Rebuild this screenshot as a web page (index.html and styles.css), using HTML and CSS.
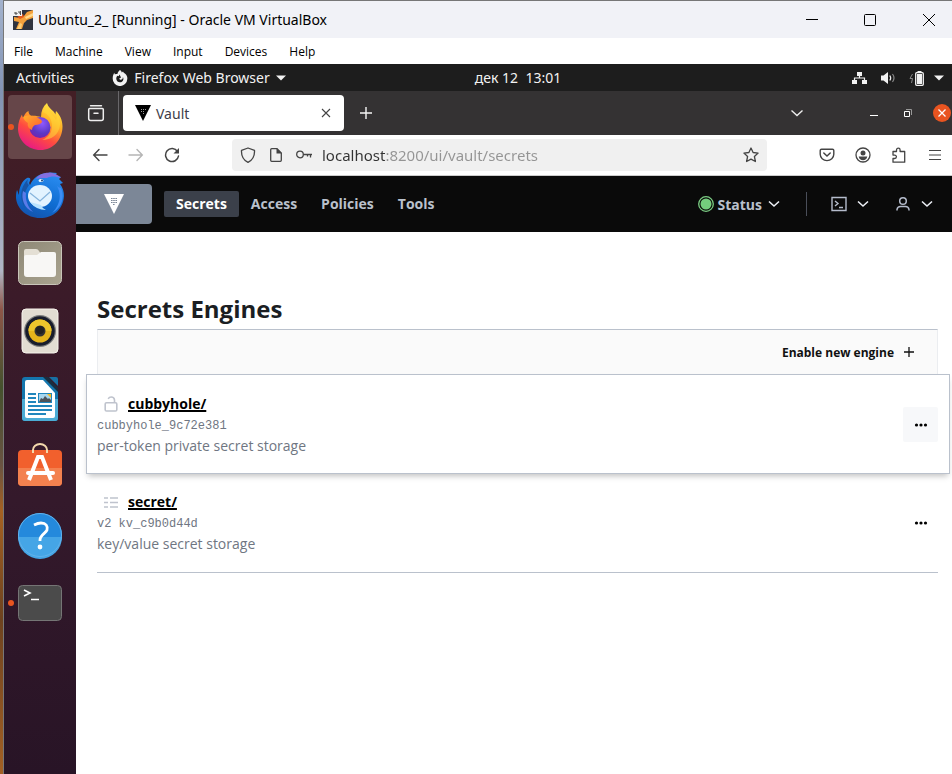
FILE: index.html
```html
<!DOCTYPE html>
<html lang="en">
<head>
<meta charset="utf-8">
<title>Ubuntu_2_ [Running] - Oracle VM VirtualBox</title>
<link rel="stylesheet" href="styles.css">
</head>
<body>
<div class="window">
  <header class="titlebar">
    <svg class="app-icon" width="20" height="20" viewBox="0 0 20 20" aria-hidden="true">
      <rect width="20" height="20" fill="#30343f"/>
      <path d="M1 7 7 8 11 6 14 2 20 0V8L14 10 11 13 9 19H3L6 12 1 11Z" fill="#f4a13c"/>
      <path d="M4 7 10 4 11 7 7 9Z" fill="#e2591d"/>
      <path d="M12 7 20 3V6L13 9Z" fill="#ffd98b"/>
      <path d="M4 19 7 13 9 14 8 19Z" fill="#ffcf77"/>
      <rect x="0" y="0" width="9" height="6" fill="#f2f2f2"/>
      <path d="M2 2v2h2V3H2M6 1v2h2M7.500 1v4" stroke="#555" fill="none"/>
    </svg>
    <h1 class="window-title">Ubuntu_2_ [Running] - Oracle VM VirtualBox</h1>
    <div class="window-buttons">
      <button type="button" aria-label="Minimize"><svg width="14" height="14" viewBox="0 0 14 14"><path d="M1 6.500h12" stroke="#000"/></svg></button>
      <button type="button" aria-label="Maximize"><svg width="14" height="14" viewBox="0 0 14 14"><rect x="1.500" y="1.500" width="11" height="11" rx="1" fill="none" stroke="#000"/></svg></button>
      <button type="button" aria-label="Close"><svg width="14" height="14" viewBox="0 0 14 14"><path d="M1 1 13 13M13 1 1 13" stroke="#000"/></svg></button>
    </div>
  </header>
  <nav class="menubar" aria-label="Machine window">
    <button type="button">File</button>
    <button type="button">Machine</button>
    <button type="button">View</button>
    <button type="button">Input</button>
    <button type="button">Devices</button>
    <button type="button">Help</button>
  </nav>

  <div class="topbar">
    <div class="topbar-left">
      <button type="button">Activities</button>
      <button type="button" class="app-menu">
        <svg width="16" height="16" viewBox="0 0 16 16" aria-hidden="true"><path fill="#f2f2f2" d="M8 0c1 .6 1.600 1.400 1.800 2.400L11 1.400c.4 1 1.300 1.500 2.200 2.300C15 5.400 15.500 7 15.300 9A7.300 7.300 0 0 1 .7 8.500C.7 6 1.400 4.100 2.500 2.800c0 .7.100 1.200.4 1.600.800-.5 1.600-.600 2.500-.4C5.800 2.300 6.700.9 8 0Z"/><path fill="#1d1d1d" d="M7.600 4.600 9 7.500l-2 1.300 1.300.9c1.700.2 2.700-.9 2.600-2.600 1 1.500.6 3.600-.9 4.600-2.400 1.500-5.500 0-5.700-2.700-.100-1.400.4-2.500 1.300-3.200.3.300.6.500 1 .5Z"/></svg>
        <span>Firefox Web Browser</span>
        <svg width="10" height="6" viewBox="0 0 10 6" aria-hidden="true"><path d="M0 .5h10L5 5.500Z" fill="#f2f2f2"/></svg>
      </button>
    </div>
    <time class="clock">дек 12&nbsp; 13:01</time>
    <button type="button" class="tray" aria-label="System menu">
      <svg width="16" height="16" viewBox="0 0 16 16"><path d="M6 2h5v4H6ZM1 10h5v4H1ZM11 10h5v4h-5Z" fill="#f2f2f2"/><path d="M8.500 6v2M3.500 10V8h10v2" fill="none" stroke="#f2f2f2" stroke-width="1.200"/></svg>
      <svg width="16" height="16" viewBox="0 0 16 16"><path d="M1 5.500h2.500L8 2v12l-4.500-3.500H1Z" fill="#f2f2f2"/><path d="M9.800 5.500q1.800 2.500 0 5" fill="none" stroke="#f2f2f2" stroke-width="1.200"/><path d="M12.500 4q3 4 0 8" fill="none" stroke="#888" stroke-width="1.200"/></svg>
      <svg width="16" height="16" viewBox="0 0 16 16"><path d="M3.500 4 1 8.500h2.500L2.500 13" fill="none" stroke="#888"/><rect x="6.700" y="2.700" width="7.600" height="12.600" rx="1" fill="none" stroke="#f2f2f2" stroke-width="1.300"/><path d="M8 4h5v10H8ZM8.500 1h4v2h-4Z" fill="#f2f2f2"/></svg>
      <svg class="tray-arrow" width="10" height="6" viewBox="0 0 10 6"><path d="M0 .5h10L5 5.500Z" fill="#f2f2f2"/></svg>
    </button>
  </div>

  <div class="desktop">
    <nav class="dock" aria-label="Dock">
      <button type="button" class="active running" aria-label="Firefox">
        <svg width="48" height="48" viewBox="0 0 48 48">
          <defs>
            <linearGradient id="ffa" x1=".8" y1="0" x2=".25" y2="1"><stop offset="0" stop-color="#fff14a"/><stop offset=".35" stop-color="#ffae25"/><stop offset=".65" stop-color="#ff4b40"/><stop offset="1" stop-color="#e5158c"/></linearGradient>
            <radialGradient id="ffb" cx=".6" cy=".3" r=".8"><stop offset="0" stop-color="#9059ff"/><stop offset=".6" stop-color="#5b38c4"/><stop offset="1" stop-color="#7a1fa8"/></radialGradient>
            <linearGradient id="ffc" x1="0" y1="0" x2="1" y2="1"><stop offset="0" stop-color="#ffb12b"/><stop offset="1" stop-color="#ff5a32"/></linearGradient>
          </defs>
          <path fill="url(#ffa)" d="M31 0c1 4 4 6 6.500 8.500 1 1 1.500 2 1.800 3L40 8c4 4 6.500 9 6.500 15.500C46.500 36.500 37 47 24.500 47S2 37.500 2 25.500c0-6 2-10.500 4-14 .2 2 .8 3 1.500 3.500C8 12 9.500 9.500 12.500 8c0 2.500 1 4 3 5 3-.5 6.500.5 9.500 1 0-6 2-10.500 6-14Z"/>
          <circle cx="24" cy="24.500" r="10.500" fill="url(#ffb)"/>
          <path d="M7 14c4-2 10-2 15 1 3 1 4 3 4 4-1 2-4 3-7 3-2 1-3 3-3 5-3-1-5-4-4-7-2-1-4-3-5-6Z" fill="url(#ffc)"/>
          <path d="M27 9c5 2 9 7 9 14 0 8-5 12-10 14 9 0 17-5 18-15 .4-4-1-8-3-10 0 3-.5 4-1 5-2-5-8-7-9-15-3 3-4 5-4 7Z" fill="#ffd93a" opacity=".55"/>
        </svg>
      </button>
      <button type="button" aria-label="Thunderbird">
        <svg width="48" height="48" viewBox="0 0 48 48">
          <defs><linearGradient id="tba" x1=".7" y1="0" x2=".3" y2="1"><stop offset="0" stop-color="#2a8cf0"/><stop offset=".6" stop-color="#0e6bd0"/><stop offset="1" stop-color="#1453ad"/></linearGradient></defs>
          <path fill="url(#tba)" d="M14 14c3-7 9-12 18-12 3-1 6 0 9 0l-2 2 6 2-2 2 4 4-3 1c3 4 4 8 4 12-1 14-11 22-24 22C11 47 1 38 0 27c0-3 0-5 1-8 1 2 1 3 2 5 0-8 3-14 8-17 3-1 4 1 3 3-1 1-1 3 0 4Z"/>
          <path d="M20 8c3-5 9-7 16-6 5 1 7 3 9 5-6-2-10-2-14 0-5 0-8 0-11 1Z" fill="#846fe0"/>
          <path d="M12 8C4 16 3 28 9 37c-3-8-1-16 4-23-2-1-2-3-1-6Z" fill="#1855a6"/>
          <path d="M7 20c-2 8 1 17 10 21-5-5-8-12-7-19Z" fill="#5b7be8"/>
          <path d="M41 15c5 9 3 19-5 27 10-5 13-16 9-25-1 0-3-1-4-2Z" fill="#3d8df5"/>
          <ellipse cx="24" cy="25" rx="12" ry="11" fill="#e3f3ff"/>
          <path d="M14 31q6 8 16 8-4-2-5-5Z" fill="#b8e3ff"/>
          <path d="m14 22 10 8 10-9" fill="none" stroke="#88b5dd" stroke-width="1.300"/>
          <ellipse cx="25" cy="9.500" rx="2.500" ry="1.500" fill="#e8f5ff"/><circle cx="26" cy="9.500" r="1" fill="#174176"/>
        </svg>
      </button>
      <button type="button" aria-label="Files">
        <svg width="48" height="48" viewBox="0 0 48 48">
          <defs><linearGradient id="fia" x1="0" y1="0" x2="1" y2="1"><stop offset="0" stop-color="#8e8876"/><stop offset="1" stop-color="#aaa490"/></linearGradient></defs>
          <rect x="2.500" y="2.500" width="43" height="43" rx="5" fill="url(#fia)" stroke="#c9c5b9"/>
          <path d="M8 16v-4q0-2 2-2h10q2 0 3 2l2 3v5H8Z" fill="#e4dfd4"/>
          <path d="M8 18q0-2 2-2h11l4-3h13q2 0 2 2v20q0 3-3 3H11q-3 0-3-3Z" fill="#f8f7f5"/>
        </svg>
      </button>
      <button type="button" aria-label="Rhythmbox">
        <svg width="48" height="48" viewBox="0 0 48 48">
          <rect x="6" y="2" width="36" height="44" rx="4" fill="#e2ddd2" stroke="#f7f4ed"/>
          <circle cx="24" cy="24" r="16" fill="#7c7d7c"/><circle cx="24" cy="24" r="14.800" fill="#181d2c"/><circle cx="24" cy="24" r="11.500" fill="#e5b51b"/><path d="M12.500 24a11.500 11.500 0 0 1 23 0Z" fill="#edc62c"/><circle cx="24" cy="24" r="5.500" fill="#333"/><circle cx="24" cy="23" r="4" fill="#222"/>
        </svg>
      </button>
      <button type="button" aria-label="LibreOffice Writer">
        <svg width="48" height="48" viewBox="0 0 48 48">
          <path d="M9 2h20l13 14v27q0 3-3 3H9q-3 0-3-3V5q0-3 3-3Z" fill="#1476ad"/>
          <path d="M6 24h36v19q0 3-3 3H9q-3 0-3-3Z" fill="#4bacd5"/>
          <path d="M11 5h16l12 13v23q0 2-2 2H11q-2 0-2-2V7q0-2 2-2Z" fill="#fff"/>
          <path d="M27 2 42 17V13L32 2Z" fill="#182e40"/><path d="M33 2h7q2 0 2 2v7Z" fill="#1770a4"/>
          <path d="M12 19h8M12 23h8M12 27h8M12 31h24M12 35h24M12 39h18" stroke="#2086bd" stroke-width="2"/>
          <rect x="22" y="18" width="14" height="10" fill="#2086bd"/><rect x="23" y="19" width="12" height="8" fill="#a8d6ee"/><path d="m23 27 2-4 2 1 2-3 3 3 1-1 2 2v2Z" fill="#4c5359"/><path d="M31 19h4v4Z" fill="#f5b921"/>
        </svg>
      </button>
      <button type="button" aria-label="Ubuntu Software">
        <svg width="48" height="48" viewBox="0 0 48 48">
          <rect x="2" y="7" width="44" height="36" rx="4" fill="#f1602d"/><path d="M2 25h44v14q0 4-4 4H6q-4 0-4-4Z" fill="#f3814f"/>
          <path d="M17 10V7a7 6 0 0 1 14 0v3" fill="none" stroke="#f4d8ac" stroke-width="2"/>
          <path d="m13 37 9-23h4l9 23" fill="none" stroke="#fff" stroke-width="4"/><path d="M12 30h25" stroke="#fff" stroke-width="4" stroke-linecap="round"/>
        </svg>
      </button>
      <button type="button" aria-label="Help">
        <svg width="48" height="48" viewBox="0 0 48 48">
          <circle cx="24" cy="24" r="22" fill="#2489dc"/><path d="M2 26h44a22 22 0 0 1-44 0Z" fill="#45a5e6"/><circle cx="24" cy="24" r="21.500" fill="none" stroke="#62b2ea"/>
          <path d="M18 14q4-2 7-2c5 0 7 3 6 7-1 3-7 5-7 10v1" fill="none" stroke="#fff" stroke-width="2.800"/><circle cx="24" cy="36" r="2.400" fill="#fff"/>
        </svg>
      </button>
      <button type="button" class="running" aria-label="Terminal">
        <svg width="48" height="48" viewBox="0 0 48 48">
          <rect x="2.500" y="6.500" width="43" height="35" rx="4" fill="#4b4b4b" stroke="#757575"/><path d="m8 11 6 3-6 3" fill="none" stroke="#fff" stroke-width="1.600"/><path d="M15 20.500h8" stroke="#fff" stroke-width="1.500"/>
        </svg>
      </button>
    </nav>

    <main class="browser">
      <div class="tabstrip">
        <button type="button" class="tab-list" aria-label="View recent browsing"><svg width="18" height="18" viewBox="0 0 18 18"><path d="M3.500 1.700h11" stroke="#eee" stroke-width="1.400" stroke-linecap="round"/><path d="M1.700 5.500q0-1 1-1h12.600q1 0 1 1v9q0 2-2 2H3.700q-2 0-2-2ZM7 9.300h4" fill="none" stroke="#eee" stroke-width="1.500" stroke-linecap="round"/></svg></button>
        <div class="tab">
          <svg width="16" height="16" viewBox="0 0 16 16" aria-hidden="true"><path d="M0 0h16L8 16Z" fill="#000"/><path d="M6 4h1v1H6ZM8 4h1v1H8ZM10 4h1v1h-1ZM6 6h1v1H6ZM8 6h1v1H8ZM8 8h1v1H8Z" fill="#999"/></svg>
          <span class="tab-title">Vault</span>
          <button type="button" aria-label="Close tab"><svg width="10" height="10" viewBox="0 0 10 10"><path d="m1 1 8 8M9 1 1 9" stroke="#444" stroke-width="1.100"/></svg></button>
        </div>
        <button type="button" class="new-tab" aria-label="New tab"><svg width="14" height="14" viewBox="0 0 14 14"><path d="M7 1v12M1 7h12" stroke="#f5f5f5" stroke-width="1.400"/></svg></button>
        <div class="tabstrip-end">
          <button type="button" class="all-tabs" aria-label="List all tabs"><svg width="14" height="14" viewBox="0 0 14 14"><path d="m1.500 4.500 5.500 5 5.500-5" fill="none" stroke="#eee" stroke-width="1.400"/></svg></button>
          <button type="button" aria-label="Minimize browser"><svg width="10" height="10" viewBox="0 0 10 10"><path d="M1 7.500h8" stroke="#fff"/></svg></button>
          <button type="button" aria-label="Restore browser"><svg width="10" height="10" viewBox="0 0 10 10"><path d="M1.500 3.500h5v5h-5Z" fill="none" stroke="#fff"/><path d="M3 1.500h5.500V7" fill="none" stroke="#999"/></svg></button>
          <button type="button" class="close" aria-label="Close browser"><svg width="10" height="10" viewBox="0 0 10 10"><path d="m1.500 1.500 7 7M8.500 1.500l-7 7" stroke="#fff" stroke-width="1.300"/></svg></button>
        </div>
      </div>

      <div class="toolbar">
        <button type="button" aria-label="Back"><svg width="16" height="16" viewBox="0 0 16 16"><path d="M7 2.500 1.700 8 7 13.500M2 8h13" fill="none" stroke="#444" stroke-width="1.400" stroke-linecap="round"/></svg></button>
        <button type="button" aria-label="Forward" disabled><svg width="16" height="16" viewBox="0 0 16 16"><path d="m9 2.500 5.300 5.500L9 13.500M14 8H1" fill="none" stroke="#b5b5b5" stroke-width="1.400" stroke-linecap="round"/></svg></button>
        <button type="button" aria-label="Reload"><svg width="16" height="16" viewBox="0 0 16 16"><path d="M13.500 4.500A6.500 6.500 0 1 0 14.500 9" fill="none" stroke="#444" stroke-width="1.500" stroke-linecap="round"/><path d="M15 1v5.500H9.500Z" fill="#444"/></svg></button>
        <div class="urlbar">
          <svg width="16" height="16" viewBox="0 0 16 16" aria-hidden="true"><path d="M8 1 14.500 3.400C14.800 9 12.500 13 8 15.300 3.500 13 1.200 9 1.500 3.400Z" fill="none" stroke="#444" stroke-width="1.300" stroke-linejoin="round"/></svg>
          <svg width="16" height="16" viewBox="0 0 16 16" aria-hidden="true"><path d="M3.700 1.700H9L13.300 6v7.300q0 1-1 1H3.700q-1 0-1-1V2.700q0-1 1-1Z" fill="none" stroke="#444" stroke-width="1.300"/><path d="M8.500 1v5.500H14Z" fill="#444"/></svg>
          <svg width="16" height="16" viewBox="0 0 16 16" aria-hidden="true"><circle cx="4" cy="7.500" r="3.300" fill="none" stroke="#444" stroke-width="1.300"/><path d="M7.300 7.500H16M14.500 7.500v3M11.500 7.500v2" fill="none" stroke="#444" stroke-width="1.300"/></svg>
          <input type="text" aria-label="Address" value="localhost:8200/ui/vault/secrets" spellcheck="false">
          <button type="button" aria-label="Bookmark"><svg width="16" height="16" viewBox="0 0 16 16"><path d="m8 1 2.100 4.500 5 .6-3.700 3.400 1 5L8 12.100l-4.400 2.400 1-5L.9 6.100l5-.6Z" fill="none" stroke="#444" stroke-width="1.300" stroke-linejoin="round"/></svg></button>
        </div>
        <button type="button" aria-label="Pocket"><svg width="16" height="16" viewBox="0 0 16 16"><path d="M2.500 2.200h11q1.300 0 1.300 1.300v3.800a6.800 6.300 0 0 1-13.600 0V3.500q0-1.300 1.300-1.300Z" fill="none" stroke="#444" stroke-width="1.400"/><path d="m4.800 6 3.200 3 3.200-3" fill="none" stroke="#444" stroke-width="1.500" stroke-linecap="round"/></svg></button>
        <button type="button" aria-label="Account"><svg width="16" height="16" viewBox="0 0 16 16"><circle cx="8" cy="8" r="7" fill="none" stroke="#444" stroke-width="1.300"/><circle cx="8" cy="6" r="2.500" fill="#444"/><path d="M3.700 9.500h8.600q-.8 3.800-4.300 3.800T3.700 9.500Z" fill="#444"/></svg></button>
        <button type="button" aria-label="Extensions"><svg width="16" height="16" viewBox="0 0 16 16"><path d="M2 4.500h3.500V3a1.800 1.800 0 0 1 3.600 0v1.500h4.600v10.700H2V11.500h1.700a1.700 1.700 0 0 0 0-3.400H2Z" fill="none" stroke="#444" stroke-width="1.300" stroke-linejoin="round"/></svg></button>
        <button type="button" aria-label="Menu"><svg width="16" height="16" viewBox="0 0 16 16"><path d="M2 3.500h12M2 8h12M2 12.500h12" stroke="#444" stroke-width="1.200"/></svg></button>
      </div>

      <div class="vault-nav">
        <a class="vault-logo" href="#" aria-label="Vault home"><svg width="20" height="20" viewBox="0 0 20 20"><path d="M0 0h20L10 20Z" fill="#fff"/><path d="M7 4.500h6M7 6.500h6M7 8.500h6M9 10.500h2" stroke="#7c8797" stroke-dasharray="1.600 .6"/></svg></a>
        <nav class="vault-links" aria-label="Vault">
          <a class="current" href="#">Secrets</a>
          <a href="#">Access</a>
          <a href="#">Policies</a>
          <a href="#">Tools</a>
        </nav>
        <div class="vault-tools">
          <button type="button" class="status">
            <svg width="16" height="16" viewBox="0 0 16 16" aria-hidden="true"><circle cx="8" cy="8" r="7.300" fill="none" stroke="#7bcc83" stroke-width="1.300"/><circle cx="8" cy="8" r="5.500" fill="#74cc7d"/></svg>
            <span>Status</span>
            <svg class="chev" width="12" height="12" viewBox="0 0 12 12" aria-hidden="true"><path d="m1 3.500 5 4.500 5-4.500"/></svg>
          </button>
          <button type="button" class="console" aria-label="Console">
            <svg width="16" height="16" viewBox="0 0 16 16"><path d="M1 1.500h14v13H1ZM4 5l3 2.500L4 10M8 11.500h4" fill="none" stroke="#b5bccc" stroke-width="1.400"/></svg>
            <svg class="chev" width="12" height="12" viewBox="0 0 12 12"><path d="m1 3.500 5 4.500 5-4.500"/></svg>
          </button>
          <button type="button" class="user" aria-label="User">
            <svg width="16" height="16" viewBox="0 0 16 16"><circle cx="8" cy="5" r="3.300" fill="none" stroke="#b5bccc" stroke-width="1.500"/><path d="M2 14.500v-1q.5-3 3.500-3h5q3 0 3.500 3v1" fill="none" stroke="#b5bccc" stroke-width="1.500"/></svg>
            <svg class="chev" width="12" height="12" viewBox="0 0 12 12"><path d="m1 3.500 5 4.500 5-4.500"/></svg>
          </button>
        </div>
      </div>

      <section class="page">
        <h2>Secrets Engines</h2>
        <div class="actions">
          <a href="#">Enable new engine <svg width="12" height="12" viewBox="0 0 12 12" aria-hidden="true"><path d="M6 1v10M1 6h10" stroke="#111" stroke-width="1.300"/></svg></a>
        </div>
        <article class="engine raised">
          <div class="engine-info">
            <h3><svg width="16" height="16" viewBox="0 0 16 16" aria-hidden="true"><path d="M3.500 6.800h9q1.300 0 1.300 1.300v5.600q0 1.300-1.300 1.300h-9q-1.300 0-1.300-1.300V8.100q0-1.300 1.300-1.300ZM11.500 6.500V4q-.3-3-3.300-3-2 0-3 1.800" fill="none" stroke="#bfc3cd" stroke-width="1.600"/></svg><a href="#">cubbyhole/</a></h3>
            <code>cubbyhole_9c72e381</code>
            <p>per-token private secret storage</p>
          </div>
          <button type="button" class="more" aria-label="More options for cubbyhole"><svg width="14" height="14" viewBox="0 0 14 14"><circle cx="2.500" cy="7" r="1.600"/><circle cx="7" cy="7" r="1.600"/><circle cx="11.500" cy="7" r="1.600"/></svg></button>
        </article>
        <article class="engine">
          <div class="engine-info">
            <h3><svg width="16" height="16" viewBox="0 0 16 16" aria-hidden="true"><path d="M1 4h4M7 4h8M1 8.500h4M7 8.500h8M1 13h4M7 13h8" stroke="#bfc3cd" stroke-width="1.700"/></svg><a href="#">secret/</a></h3>
            <code>v2 kv_c9b0d44d</code>
            <p>key/value secret storage</p>
          </div>
          <button type="button" class="more" aria-label="More options for secret"><svg width="14" height="14" viewBox="0 0 14 14"><circle cx="2.500" cy="7" r="1.600"/><circle cx="7" cy="7" r="1.600"/><circle cx="11.500" cy="7" r="1.600"/></svg></button>
        </article>
      </section>
    </main>
  </div>
</div>
</body>
</html>
```
FILE: styles.css
```css
* { box-sizing: border-box; }

body {
  margin: 0;
  padding-left: 3px;
  min-height: 100vh;
  display: flex;
  font-family: "Noto Sans", "Open Sans", sans-serif;
  font-size: 14px;
  background: linear-gradient(#a3b2cd 0, #8293b3 12%, #b1b5c5 35%, #8d5648 40%, #45512d 50%, #695342 60%, #a56122 66%, #6d421f 80%, #a36024 100%);
}

h1, h2, h3, p { margin: 0; }

button {
  margin: 0;
  padding: 0;
  border: 0;
  background: none;
  color: inherit;
  font: inherit;
  display: flex;
  align-items: center;
  justify-content: center;
}

a { color: inherit; text-decoration: none; }

svg { display: block; flex: none; }

.window {
  flex: 1;
  min-width: 0;
  display: flex;
  flex-direction: column;
  border-top: 1px solid #777;
  border-left: 1px solid #777;
  background: #fff;
}

.titlebar {
  height: 37px;
  display: flex;
  align-items: center;
  gap: 5px;
  padding-left: 9px;
  background: #f1f2f7;
}

.window-title {
  font-size: 14px;
  font-weight: 400;
  color: #000;
}

.window-buttons { margin-left: auto; display: flex; }
.window-buttons button { width: 58px; height: 36px; }
.window-buttons button:last-child { width: 53px; padding-left: 7px; }

.menubar {
  height: 26px;
  display: flex;
  align-items: center;
  padding-left: 10px;
  gap: 22px;
  font-family: "Open Sans", sans-serif;
  font-size: 12px;
  color: #000;
}

.topbar {
  height: 27px;
  display: grid;
  grid-template-columns: 1fr auto 1fr;
  align-items: center;
  padding: 0 8px 0 12px;
  background: #1d1d1d;
  color: #f2f2f2;
}

.topbar-left { display: flex; gap: 38px; }
.app-menu { gap: 6px; }
.clock { margin-left: 76px; }
.tray { justify-self: end; gap: 13px; }
.tray-arrow { margin-left: -4px; }

.desktop { flex: 1; display: flex; }

.dock {
  width: 72px;
  padding: 4px;
  display: flex;
  flex-direction: column;
  gap: 4px;
  background: linear-gradient(#431e25 0, #3b1b29 30%, #34192b 60%, #281426 100%);
}

.dock button {
  position: relative;
  width: 64px;
  height: 64px;
  border-radius: 4px;
}

.dock .active { background: #664649; }

.dock .running::before {
  content: "";
  position: absolute;
  left: 0;
  top: 29px;
  width: 6px;
  height: 6px;
  border-radius: 50%;
  background: #e95420;
}

.browser { flex: 1; min-width: 0; background: #fff; }

.tabstrip {
  height: 44px;
  display: flex;
  align-items: center;
  background: #343233;
}

.tab-list {
  width: 43px;
  height: 44px;
  padding-right: 2px;
  border-right: 1px solid #69676a;
}

.tab {
  width: 221px;
  height: 36px;
  margin-left: 4px;
  padding: 0 13px 0 12px;
  display: flex;
  align-items: center;
  gap: 5px;
  border-radius: 4px;
  background: #fff;
  color: #3d3d48;
}

.tab-title { flex: 1; }
.new-tab { width: 43px; height: 36px; }

.tabstrip-end {
  margin-left: auto;
  padding-right: 1px;
  display: flex;
  align-items: center;
  gap: 16px;
}

.tabstrip-end button { width: 18px; height: 18px; }
.tabstrip-end .all-tabs { margin-right: 43px; }

.tabstrip-end .close {
  border-radius: 50%;
  background: #e95420;
}

.toolbar {
  height: 41px;
  display: flex;
  align-items: center;
  padding-left: 6px;
  border-bottom: 1px solid #ccc;
}

.toolbar > button { width: 36px; height: 32px; }
.toolbar > button:last-child { width: 35px; }

.urlbar {
  flex: 1;
  height: 32px;
  margin: 0 42px;
  padding: 0 8px;
  display: flex;
  align-items: center;
  gap: 12px;
  border-radius: 4px;
  background: #f0f0f0;
}

.urlbar input {
  flex: 1;
  min-width: 0;
  margin-left: -2px;
  padding: 0;
  border: 0;
  outline: 0;
  font: inherit;
  font-size: 15px;
  background: linear-gradient(90deg, #333 64px, #949494 64px);
  background-clip: text;
  -webkit-background-clip: text;
  color: transparent;
}

.vault-nav {
  height: 56px;
  display: flex;
  align-items: center;
  background: #0a0a0a;
  color: #bac1cc;
  font-family: "Open Sans", sans-serif;
  font-weight: 700;
}

.vault-logo {
  width: 76px;
  height: 40px;
  display: flex;
  align-items: center;
  justify-content: center;
  border-radius: 0 4px 4px 0;
  background: #7c8797;
}

.vault-links { margin-left: 12px; display: flex; }

.vault-links a {
  height: 26px;
  padding: 0 12px;
  line-height: 26px;
  border-radius: 2px;
}

.vault-links .current { background: #3b404a; color: #fff; }

.vault-tools { margin-left: auto; display: flex; align-items: center; padding-right: 19px; }
.vault-tools button { height: 24px; }
.status { gap: 4px; padding-right: 26px; }
.console { gap: 10px; padding: 0 26px 0 24px; border-left: 1px solid #4a4e59; }
.user { gap: 10px; }

.chev path { fill: none; stroke: #eceff5; stroke-width: 1.600; }
.status .chev { margin-left: 2px; }

.page {
  padding: 60px 14px 0 21px;
  font-family: "Open Sans", sans-serif;
  color: #1b1e23;
}

.page h2 {
  padding-bottom: 3px;
  font-size: 24px;
  line-height: 34px;
}

.actions {
  height: 45px;
  display: flex;
  align-items: center;
  justify-content: flex-end;
  padding-right: 22px;
  border: 1px solid #ebedf0;
  border-top-color: #bac1cc;
  border-bottom: 0;
  background: #fafafa;
}

.actions a {
  display: flex;
  align-items: center;
  gap: 9px;
  font-size: 12px;
  font-weight: 700;
  color: #111;
}

.engine {
  display: flex;
  align-items: center;
  padding: 17px 0 18px;
  border-bottom: 1px solid #bac1cc;
}

.engine.raised {
  margin: 0 -12px 0 -11px;
  padding: 18px 11px 17px 10px;
  border: 1px solid #bac1cc;
  box-shadow: 0 4px 6px -2px rgba(0, 0, 0, .25);
}

.engine-info { flex: 1; line-height: 21px; color: #6f7682; }

.engine h3 {
  display: flex;
  align-items: center;
  gap: 9px;
  padding-left: 6px;
  font-size: 14px;
  line-height: 21px;
  color: #000;
}

.engine h3 a { text-decoration: underline; text-decoration-thickness: 2px; }

.engine code {
  display: block;
  padding-top: 3px;
  line-height: 18px;
  font-family: "Liberation Mono", monospace;
  font-size: 12px;
}

.more { width: 35px; height: 35px; border-radius: 2px; }
.raised .more { background: #f7f8fa; }
```
